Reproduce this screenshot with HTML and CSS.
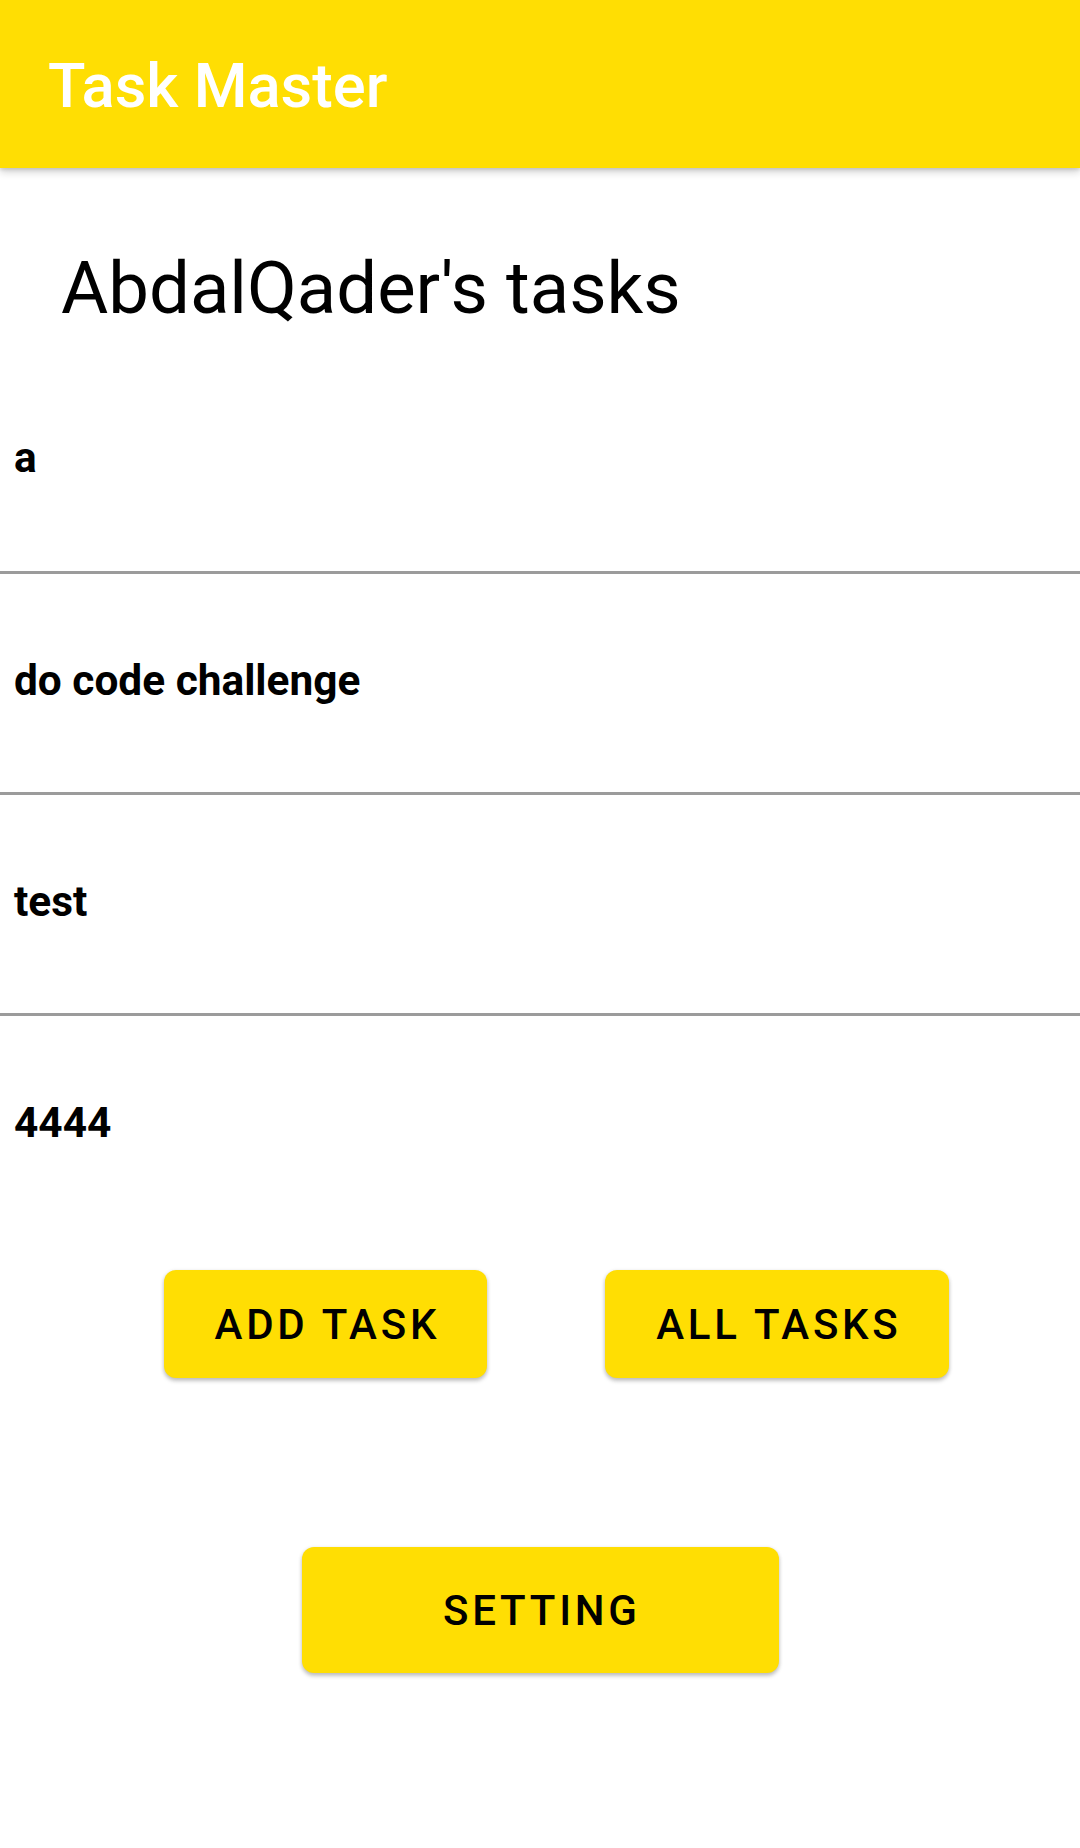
FILE: index.html
```html
<!DOCTYPE html>
<html lang="en">
<head>
<meta charset="utf-8">
<title>Task Master</title>
<link rel="stylesheet" href="styles.css">
</head>
<body>
<header class="app-bar">
  <h1 class="app-title">Task Master</h1>
</header>
<main class="content">
  <h2 class="heading">AbdalQader's tasks</h2>
  <ul class="task-list">
    <li class="task">a</li>
    <li class="task">do code challenge</li>
    <li class="task">test</li>
    <li class="task">4444</li>
  </ul>
  <div class="button-row">
    <button class="btn btn-add">ADD TASK</button>
    <button class="btn btn-all">ALL TASKS</button>
  </div>
  <div class="setting-row">
    <button class="btn btn-setting">SETTING</button>
  </div>
</main>
</body>
</html>
```
FILE: styles.css
```css
* {
  box-sizing: border-box;
}

html, body {
  margin: 0;
  padding: 0;
  background: #ffffff;
}

body {
  width: 1080px;
  min-height: 1848px;
  font-family: Roboto, "Noto Sans", "Liberation Sans", sans-serif;
  color: #000000;
}

.app-bar {
  height: 168px;
  background: #FFDE03;
  display: flex;
  align-items: center;
  padding-left: 48px;
  padding-top: 5px;
  box-shadow: 0 4px 8px rgba(0, 0, 0, 0.18), 0 2px 3px rgba(0, 0, 0, 0.1);
  position: relative;
  z-index: 1;
}

.app-title {
  margin: 0;
  font-size: 61.5px;
  font-weight: 500;
  color: #ffffff;
  line-height: 1;
}

.content {
  display: flex;
  flex-direction: column;
}

.heading {
  margin: 77px 0 0 0;
  padding-left: 61px;
  font-size: 72.5px;
  font-weight: 400;
  line-height: 88px;
  height: 88px;
}

.task-list {
  list-style: none;
  margin: 20px 0 0 0;
  padding: 0;
}

.task {
  padding: 82px 14px 87px 14px;
  font-size: 42.4px;
  font-weight: 700;
  line-height: 49px;
  border-bottom: 3px solid #9b9b9b;
}

.task:first-child {
  padding-top: 80px;
  padding-bottom: 89px;
}

.task:last-child {
  border-bottom: none;
}

.button-row {
  display: flex;
  gap: 118px;
  padding-left: 164px;
  margin-top: 36px;
}

.setting-row {
  display: flex;
  justify-content: center;
  margin-top: 169px;
}

.btn {
  border: none;
  background: #FFDE03;
  color: #000000;
  font-family: Roboto, "Noto Sans", "Liberation Sans", sans-serif;
  font-size: 42px;
  font-weight: 500;
  letter-spacing: 3.75px;
  text-indent: 3.75px;
  border-radius: 12px;
  height: 108px;
  padding: 0;
  box-shadow: 0 3px 4px rgba(0, 0, 0, 0.2), 0 1px 4px rgba(0, 0, 0, 0.12);
}

.btn-add {
  width: 323px;
}

.btn-all {
  width: 344px;
}

.btn-setting {
  width: 477px;
  height: 126px;
}
```
